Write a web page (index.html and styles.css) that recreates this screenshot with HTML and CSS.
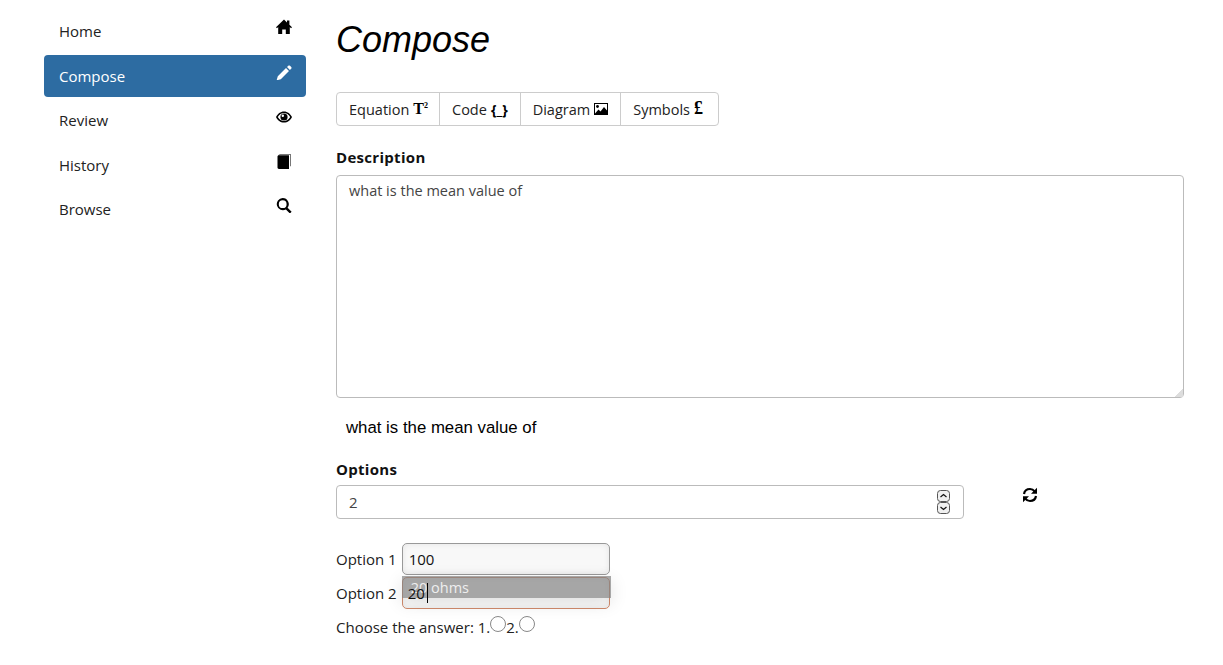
FILE: index.html
```html
<!DOCTYPE html>
<html lang="en">
<head>
    <meta charset="UTF-8">
    <title>Compose</title>
    <link rel="stylesheet" href="styles.css">
</head>
<body>
    <div class="page">
        <nav class="sidebar">
            <a class="nav-item" href="#">Home
                <svg class="nav-icon" viewBox="0 0 16 16"><path d="M8 .6 0 8.200l1 1L2.200 8.100V15h4v-4.600h3.600V15h4V8.100L15 9.200l1-1-2.600-2.500V1.500h-2.400v1.900z"/></svg>
            </a>
            <a class="nav-item active" href="#">Compose
                <svg class="nav-icon" viewBox="0 -1 16 16"><path d="M12.300.8c.5-.5 1.200-.5 1.700 0l1.200 1.200c.5.500.5 1.200 0 1.700l-1.300 1.300-2.900-2.900zM10 3.100 13 6 4.800 14.200.6 15.400l1.200-4.200z"/></svg>
            </a>
            <a class="nav-item" href="#">Review
                <svg class="nav-icon" viewBox="0 -1 16 16"><path fill-rule="evenodd" d="M8 2.400c3.600 0 6.500 2.400 8 5.600-1.500 3.200-4.400 5.600-8 5.600S1.500 11.200 0 8c1.500-3.200 4.400-5.600 8-5.600zM8 4C5.600 4 3.300 5.600 1.800 8c1.500 2.400 3.800 4 6.200 4s4.700-1.600 6.200-4C12.700 5.600 10.400 4 8 4z"/><path fill-rule="evenodd" d="M8 4.400a3.600 3.600 0 1 1 0 7.200 3.600 3.600 0 0 1 0-7.200zM6.800 5.600a1.200 1.200 0 1 0 0 2.400 1.200 1.200 0 0 0 0-2.400z"/></svg>
            </a>
            <a class="nav-item" href="#">History
                <svg class="nav-icon" viewBox="0 -.5 16 16"><path d="M2.500 2.400C2.500 1.300 3.200.6 4.200.6H15v12.200h-1V1.600H4.200z" fill="#777"/><path d="M1.500 3.200c0-.8.6-1.400 1.400-1.400H13V15.400H2.900c-.8 0-1.400-.6-1.400-1.400z"/></svg>
            </a>
            <a class="nav-item" href="#">Browse
                <svg class="nav-icon" viewBox="0 -.5 16 16"><path fill-rule="evenodd" d="M6.700.6a6.100 6.100 0 0 1 4.900 9.700l4 4-1.700 1.700-4-4A6.100 6.100 0 1 1 6.700.6zm0 2.200a3.900 3.900 0 1 0 0 7.800 3.900 3.900 0 0 0 0-7.800z"/></svg>
            </a>
        </nav>

        <main class="content">
            <h1 class="title">Compose</h1>

            <div class="btn-group">
                <button class="btn">Equation <span class="tex">T<sup>2</sup></span></button>
                <button class="btn">Code <b class="code-glyph">{_}</b></button>
                <button class="btn">Diagram
                    <svg class="btn-icon" viewBox="0 0 14 12"><path fill-rule="evenodd" d="M0 0h14v12H0zM1 1v10h12V1z"/><path d="M1 10.500 4.500 6.500l2 2L10 4l3 3.500V11H1z"/><circle cx="3.500" cy="3.500" r="1.400"/></svg>
                </button>
                <button class="btn">Symbols <b class="pound">£</b></button>
            </div>

            <label class="field-label">Description</label>
            <textarea class="description">what is the mean value of</textarea>
            <p class="preview">what is the mean value of</p>

            <label class="field-label options-label">Options</label>
            <div class="options-row">
                <div class="count-box">
                    <span>2</span>
                    <div class="spinner">
                        <svg class="spin-btn" viewBox="0 0 13 12"><rect x=".5" y=".5" width="12" height="11" rx="3"/><path d="M3.500 7 6.500 4.500l3 2.500"/></svg>
                        <svg class="spin-btn" viewBox="0 0 13 12"><rect x=".5" y=".5" width="12" height="11" rx="3"/><path d="M3.500 5 6.500 7.500l3-2.500"/></svg>
                    </div>
                </div>
                <svg class="refresh" viewBox="0 0 16 16">
                    <path class="refresh-arc" d="M2 7C2.500 4 5 2 8 2c2 0 3.600 1 4.700 2.400"/>
                    <path class="refresh-arc" d="M14 9c-.5 3-3 5-6 5-2 0-3.600-1-4.700-2.400"/>
                    <path d="M15 .8V6.800H9z"/>
                    <path d="M1 15.200V9.200H7z"/>
                </svg>
            </div>

            <div class="option-row first">
                <label>Option 1</label>
                <input class="option-input" value="100">
            </div>
            <div class="option-row">
                <label>Option 2</label>
                <div class="option-wrap">
                    <input class="option-input invalid">
                    <div class="suggest">20 ohms</div>
                    <span class="typed">20</span>
                </div>
            </div>
            <div class="answer-row">Choose the answer: 1.<span class="radio"></span>2.<span class="radio"></span></div>
        </main>
    </div>
</body>
</html>
```

FILE: styles.css
```css
* {
    box-sizing: border-box;
}

body {
    margin: 0;
    font-family: "Open Sans", sans-serif;
    font-size: 15px;
    color: #222;
    background-color: #fff;
}

.page {
    display: flex;
    padding-left: 44px;
}

/* Sidebar */
.sidebar {
    width: 262px;
    padding-top: 10px;
    flex-shrink: 0;
}

.nav-item {
    display: flex;
    justify-content: space-between;
    height: 42.500px;
    margin-bottom: 2px;
    padding: 11px 15px;
    border-radius: 4px;
    color: #222;
    line-height: 20px;
    text-decoration: none;
}

.nav-item.active {
    background-color: #2d6ca2;
    color: #fff;
}

.nav-icon {
    width: 16px;
    height: 16px;
    margin: -2px -1px 0 0;
    fill: #000;
}

.nav-item.active .nav-icon {
    fill: #fff;
}

/* Main column */
.content {
    margin-left: 30px;
    width: 848px;
}

.title {
    margin: 17px 0 30px;
    font-family: "Liberation Sans", sans-serif;
    font-size: 36px;
    font-weight: 400;
    font-style: italic;
    line-height: 45px;
    color: #000;
}

.btn-group {
    display: inline-flex;
    height: 34px;
    border: 1px solid #ccc;
    border-radius: 4px;
    vertical-align: top;
}

.btn {
    display: flex;
    align-items: center;
    gap: 4px;
    padding: 0 12px;
    border: 0;
    border-left: 1px solid #ccc;
    background: none;
    font-family: inherit;
    font-size: 14.500px;
    color: #222;
}

.btn:first-child {
    border-left: 0;
    padding-right: 11px;
}

.btn:last-child {
    padding-right: 15px;
}

.tex {
    font-family: "Liberation Serif", serif;
    font-size: 16px;
    font-weight: 700;
    color: #000;
}

.tex sup {
    font-size: 8px;
    line-height: 0;
}

.code-glyph {
    color: #000;
    font-size: 14px;
}

.pound {
    margin-top: -2px;
    font-family: "Liberation Serif", serif;
    font-size: 18px;
    color: #000;
}

.btn-icon {
    width: 14px;
    height: 12px;
    fill: #000;
}

.field-label {
    display: block;
    margin: 22px 0 8px;
    font-weight: 700;
    line-height: 19px;
    letter-spacing: .3px;
    color: #111;
}

.description {
    display: block;
    width: 100%;
    height: 223px;
    padding: 5px 12px;
    border: 1px solid #bbb;
    border-radius: 4px;
    font-family: inherit;
    font-size: 14.500px;
    line-height: 20px;
    color: #444;
}

.description::-webkit-resizer {
    background: linear-gradient(135deg, transparent 72%, #ddd 72%);
}

.preview {
    margin: 20px 0 0 10px;
    font-family: "Liberation Sans", sans-serif;
    font-size: 16.800px;
    line-height: 20px;
    color: #000;
}

.options-label {
    margin-top: 22px;
    margin-bottom: 6px;
}

.options-row {
    display: flex;
    align-items: flex-start;
}

.count-box {
    display: flex;
    align-items: center;
    justify-content: space-between;
    width: 628px;
    height: 34px;
    padding: 0 13px 0 12px;
    border: 1px solid #bbb;
    border-radius: 4px;
    color: #444;
}

.spinner {
    display: flex;
    flex-direction: column;
}

.spin-btn {
    display: block;
    width: 13px;
    height: 12px;
    fill: #f0f0f0;
    stroke: #555;
    stroke-width: 1;
}

.spin-btn path {
    fill: none;
    stroke: #111;
    stroke-width: 1.200;
}

.refresh {
    width: 16px;
    height: 16px;
    margin: 2px 0 0 58px;
    fill: #000;
}

.refresh-arc {
    fill: none;
    stroke: #000;
    stroke-width: 2.200;
}

.option-row {
    display: flex;
    align-items: center;
    gap: 5px;
    height: 34px;
    line-height: 20px;
}

.option-row.first {
    margin-top: 23px;
}

.option-wrap {
    position: relative;
}

.option-input {
    display: block;
    width: 208px;
    height: 32px;
    padding: 0 6px;
    border: 1px solid #999;
    border-radius: 5px;
    background-color: #f8f8f8;
    box-shadow: inset 0 0 6px rgba(0, 0, 0, .08);
    font-family: inherit;
    font-size: 15px;
    color: #111;
}

.option-input.invalid {
    border-color: #d08a6c;
    background-color: #fbfbfb;
}

.suggest {
    position: absolute;
    left: 0;
    top: -1px;
    width: 209px;
    height: 22px;
    padding: 1px 0 0 9px;
    background-color: rgba(130, 130, 130, .7);
    box-shadow: 0 5px 18px rgba(0, 0, 0, .12);
    color: #eee;
    font-size: 14.500px;
    line-height: 22px;
}

/* typed value and caret sit above the suggestion overlay */
.typed {
    position: absolute;
    left: 6px;
    top: 6px;
    height: 20px;
    padding-right: 2px;
    border-right: 1px solid #000;
    color: #111;
    line-height: 20px;
}

.answer-row {
    display: flex;
    align-items: flex-start;
    height: 30px;
    line-height: 20px;
    padding-top: 7px;
}

.radio {
    width: 16px;
    height: 16px;
    margin-top: -1px;
    border: 1px solid #888;
    border-radius: 50%;
    background-color: #fff;
}
```
